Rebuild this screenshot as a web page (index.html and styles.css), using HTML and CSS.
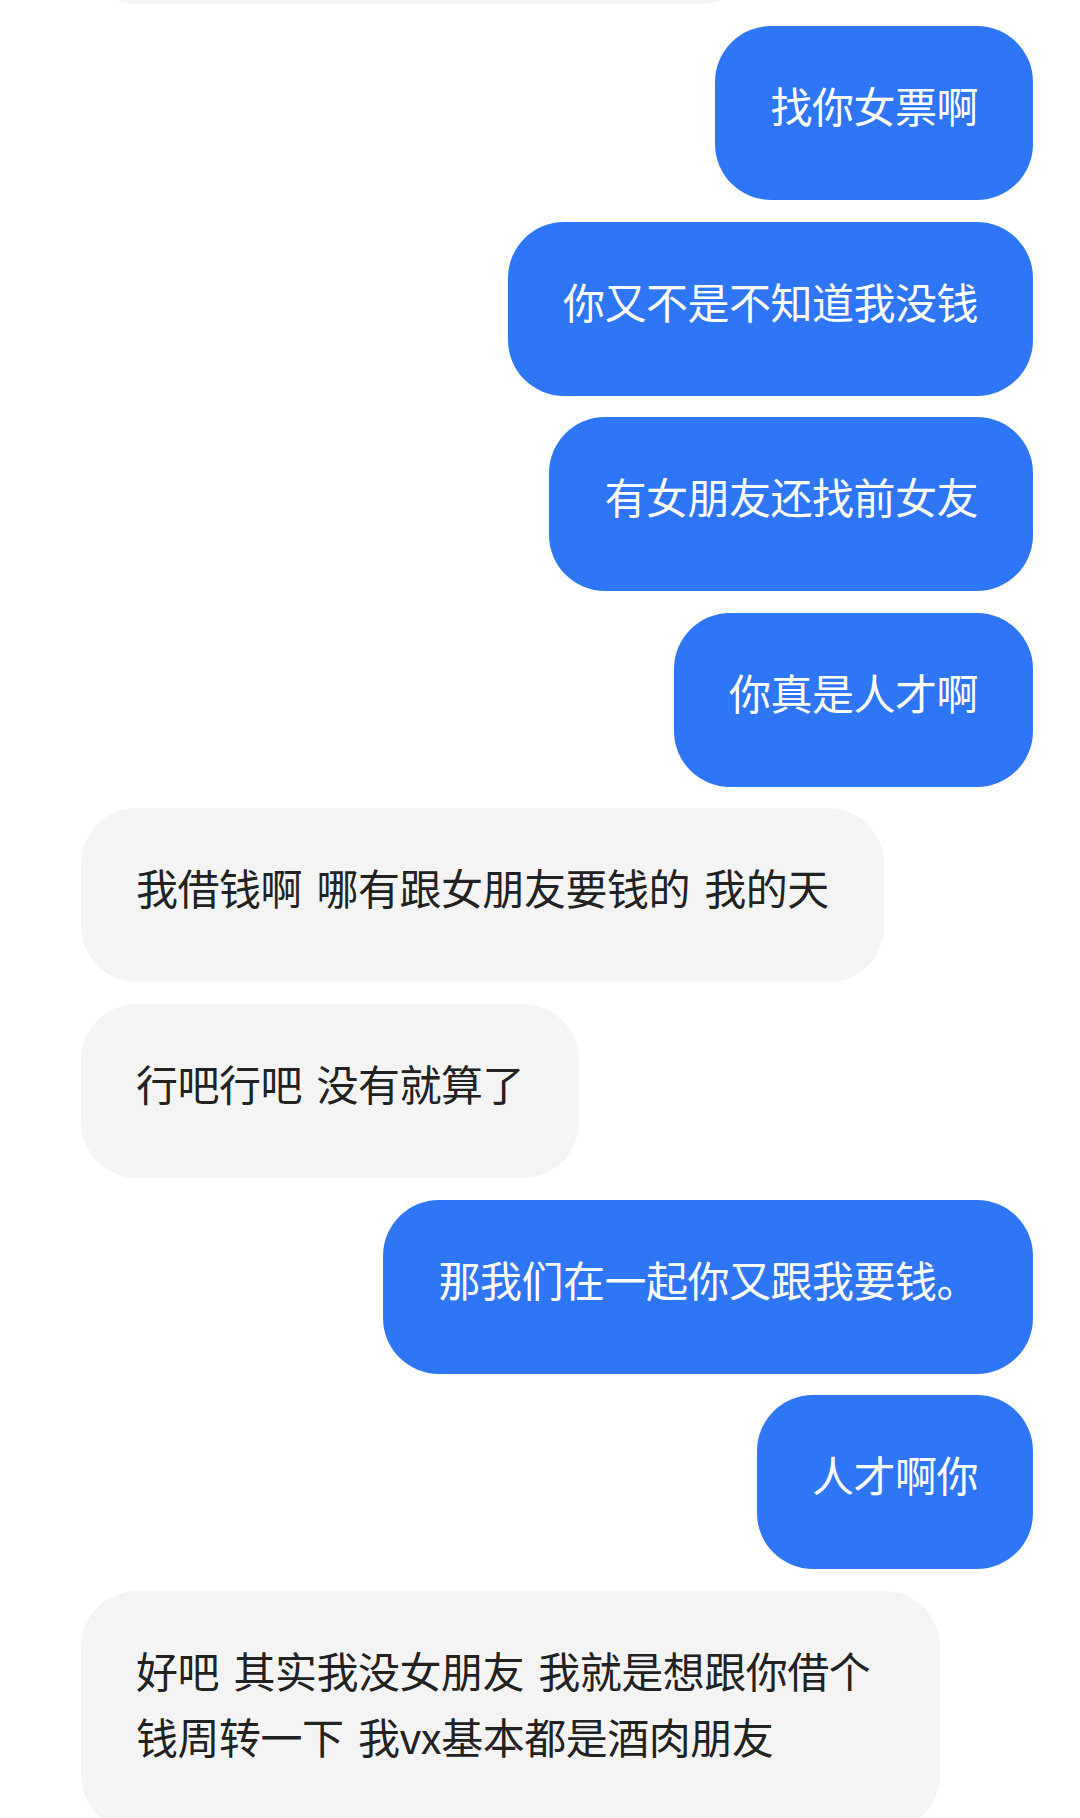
FILE: index.html
```html
<!DOCTYPE html>
<html lang="zh-CN">
<head>
<meta charset="utf-8">
<title>聊天记录</title>
<link rel="stylesheet" href="styles.css">
</head>
<body>
<main class="chat">
  <div class="bubble them clipped" aria-hidden="true"></div>
  <div class="bubble me">找你女票啊</div>
  <div class="bubble me">你又不是不知道我没钱</div>
  <div class="bubble me">有女朋友还找前女友</div>
  <div class="bubble me">你真是人才啊</div>
  <div class="bubble them">我借钱啊 哪有跟女朋友要钱的 我的天</div>
  <div class="bubble them">行吧行吧 没有就算了</div>
  <div class="bubble me">那我们在一起你又跟我要钱。</div>
  <div class="bubble me">人才啊你</div>
  <div class="bubble them">好吧 其实我没女朋友 我就是想跟你借个钱周转一下 我vx基本都是酒肉朋友</div>
</main>
</body>
</html>
```
FILE: styles.css
```css
html, body {
  margin: 0;
  padding: 0;
  background: #ffffff;
}

body {
  height: 1818px;
  overflow: hidden;
  font-family: "Noto Sans CJK SC", "Noto Sans", sans-serif;
}

.chat {
  display: flex;
  flex-direction: column;
  gap: 21.6px;
  padding: 0 47px 0 81px;
  margin-top: -169.6px;
}

.bubble {
  box-sizing: border-box;
  min-height: 174px;
  padding: 46px 55px 62px 55px;
  border-radius: 56px;
  font-size: 42px;
  line-height: 66px;
  letter-spacing: -0.5px;
  font-weight: 400;
}

.me {
  align-self: flex-end;
  background: #2f76f6;
  color: #ffffff;
}

.them {
  align-self: flex-start;
  max-width: 859px;
  background: #f4f4f4;
  color: #222222;
  word-spacing: 5.5px;
}

.clipped {
  width: 676px;
}
```
